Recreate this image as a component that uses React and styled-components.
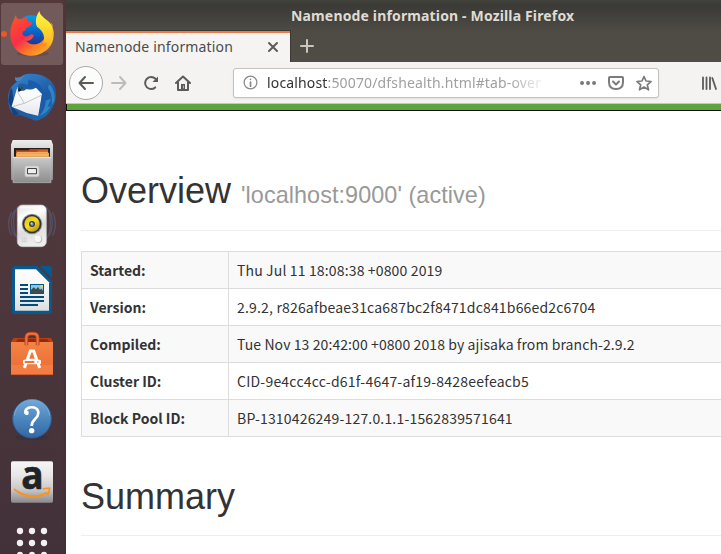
import React from "react";
import styled, { createGlobalStyle } from "styled-components";

const GlobalStyle = createGlobalStyle`
  * { box-sizing: border-box; }
  body { margin: 0; overflow: hidden; background: #fff; }
`;

const uiFont = `"Noto Sans", "Open Sans", sans-serif`;

const Desktop = styled.div`
  display: flex;
  width: 721px;
  height: 554px;
  overflow: hidden;
`;

const Launcher = styled.nav`
  flex: 0 0 66px;
  display: flex;
  flex-direction: column;
  padding-top: 2px;
  overflow: hidden;
  background: linear-gradient(90deg, transparent 62px, rgba(75, 35, 40, 0.35)),
    linear-gradient(#54393b, #51383b 35%, #49363b 65%, #43313a);
`;

const LauncherIcon = styled.svg`
  flex: none;
  display: block;
  width: 66px;
  height: 64px;
`;

const Window = styled.div`
  flex: 1;
  min-width: 0;
  display: flex;
  flex-direction: column;
`;

const Titlebar = styled.header`
  height: 62px;
  flex: none;
  display: flex;
  flex-direction: column;
  background: linear-gradient(#42423d 0, #3b3a36 5px, #403f3a 14px, #4e4b44 31px, #504d46 100%);
`;

const WindowTitle = styled.div`
  height: 30px;
  padding: 2px 0 0 225px;
  font: 700 14px/28px ${uiFont};
  letter-spacing: 0.15px;
  color: #dfdbd2;
  white-space: nowrap;
`;

const TabStrip = styled.div`
  flex: 1;
  display: flex;
  border-bottom: 1px solid #3a3833;
`;

const Tab = styled.div`
  width: 225px;
  height: 33px;
  display: flex;
  align-items: center;
  justify-content: space-between;
  padding: 0 11px 0 9px;
  border-top: 1px solid #3a3833;
  border-right: 1px solid #3a3833;
  background: linear-gradient(#ef7847 2px, #f5f4f2 2px);
  color: #4c4c4c;
  font: 400 14px/30px ${uiFont};
`;

const TabLabel = styled.span`
  letter-spacing: 0.16px;
  white-space: nowrap;
`;

const NewTab = styled.div`
  padding: 8px 0 0 8px;
`;

const Glyph = styled.svg`
  display: block;
  flex: none;
  width: ${(p) => p.$size || 16}px;
  height: ${(p) => p.$size || 16}px;
  fill: none;
  stroke: ${(p) => p.$color || "#5b5b58"};
  stroke-width: ${(p) => p.$weight || 2};
  stroke-linecap: round;
  stroke-linejoin: round;
`;

const Toolbar = styled.div`
  flex: none;
  height: 42px;
  display: flex;
  align-items: center;
  padding-left: 3px;
  background: #f4f3f2;
  border-bottom: 1px solid #c8c5c4;
`;

const BackButton = styled.div`
  width: 34px;
  height: 34px;
  display: flex;
  align-items: center;
  justify-content: center;
  border: 1px solid #aaa9a8;
  border-radius: 50%;
  background: #fcfcfc;
`;

const NavActions = styled.div`
  width: 130px;
  display: flex;
  gap: 16px;
  padding-left: 8px;
`;

const AddressBar = styled.div`
  width: 426px;
  height: 30px;
  display: flex;
  align-items: center;
  padding: 0 6px 0 9px;
  border: 1px solid #c4c1bf;
  border-radius: 3px;
  background: #fff;
  box-shadow: 0 1px 2px rgba(0, 0, 0, 0.08);
`;

const Address = styled.div`
  margin-left: 9px;
  white-space: nowrap;
  color: #a0a0a0;
  font: 400 14px/26px ${uiFont};
  letter-spacing: 0.15px;
  mask-image: linear-gradient(90deg, #000 calc(100% - 32px), rgba(0, 0, 0, 0.15));
`;

const Host = styled.span`
  color: #333;
`;

const PageActions = styled.div`
  display: flex;
  gap: 12px;
  margin-left: auto;
`;

const LibraryButton = styled.div`
  margin-left: 42px;
`;

const PageNav = styled.div`
  flex: none;
  height: 7px;
  background: #5fa33e;
  border-bottom: 1px solid #101010;
  border-left: 1px solid #101010;
`;

const Page = styled.main`
  flex: 1;
  min-height: 0;
  overflow: hidden;
  padding: 60px 0 0 15px;
  background: #fff;
  color: #333;
`;

const SectionHeader = styled.header`
  height: 60px;
  border-bottom: 1px solid #eee;
`;

const Heading = styled.h1`
  margin: 0;
  font: 400 36px/${(p) => p.$line || 40}px "Liberation Sans", Arial, sans-serif;
  white-space: nowrap;
`;

const Detail = styled.small`
  font-size: 23.4px;
  line-height: 1;
  letter-spacing: 0.07px;
  color: #999;
`;

const InfoTable = styled.dl`
  width: 800px;
  margin: 20px 0 39px;
  border: 1px solid #ddd;
  border-bottom: 0;
  font: 400 14px/20px "Noto Sans CJK SC", sans-serif;
`;

const InfoRow = styled.div`
  display: grid;
  grid-template-columns: 147px 1fr;
  height: 37px;
  border-bottom: 1px solid #ddd;
  &:nth-child(odd) { background: #f9f9f9; }
`;

const Term = styled.dt`
  padding: 8px;
  border-right: 1px solid #ddd;
  font-weight: 700;
`;

const Value = styled.dd`
  margin: 0;
  padding: 8px;
  letter-spacing: ${(p) => p.$tracking}px;
`;

const info = [
  { term: "Started:", value: "Thu Jul 11 18:08:38 +0800 2019", tracking: 0.15 },
  { term: "Version:", value: "2.9.2, r826afbeae31ca687bc2f8471dc841b66ed2c6704", tracking: 0.18 },
  { term: "Compiled:", value: "Tue Nov 13 20:42:00 +0800 2018 by ajisaka from branch-2.9.2", tracking: 0.09 },
  { term: "Cluster ID:", value: "CID-9e4cc4cc-d61f-4647-af19-8428eefeacb5", tracking: 0.22 },
  { term: "Block Pool ID:", value: "BP-1310426249-127.0.1.1-1562839571641", tracking: 0.18 },
];

const Gradient = ({ id, stops, x2 = 0, y2 = 1 }) => (
  <linearGradient id={id} x1="0" y1="0" x2={x2} y2={y2}>
    {stops.map((c, i) => (
      <stop key={i} offset={i / (stops.length - 1)} stopColor={c} />
    ))}
  </linearGradient>
);

const Firefox = () => (
  <LauncherIcon viewBox="0 6 198 192">
    <defs>
      <Gradient id="ffTail" stops={["#fff44f", "#ffe22f", "#ffc12a", "#ff8a1c"]} />
      <Gradient id="ffGlobe" stops={["#00a0e8", "#0869cc", "#202f91"]} />
      <Gradient id="ffFace" x2={0.8} stops={["#ff5a2a", "#fb4136", "#f62f4c", "#ff7a24", "#ffb52c"]} />
    </defs>
    <rect x="3" y="9" width="186" height="186" rx="9" fill="#725a5b" />
    <circle cx="12" cy="102" r="9" fill="#ee5527" />
    <ellipse cx="98" cy="161" rx="48" ry="8" fill="#3d2c32" opacity=".25" />
    <circle cx="94" cy="92" r="46" fill="url(#ffGlobe)" />
    <path d="M47 45C49 56 56 58 64 57C76 51 80 51 83 52L81 60C86 67 96 64 97 68C97 77 83 81 78 85L76 93C71 91 66 96 68 103C71 112 83 109 91 104C99 101 104 106 100 110C94 121 84 123 78 122C88 134 108 137 122 127C132 118 138 112 145 94L158 98C160 134 134 166 96 167C55 168 29 137 31 98C32 72 42 62 47 45Z" fill="url(#ffFace)" />
    <path d="M119 33C118 43 130 51 137 58C151 67 160 80 161 98C162 126 151 149 122 160C134 150 141 138 139 125C136 129 133 130 130 131C137 108 128 91 111 80C105 68 107 47 119 33Z" fill="url(#ffTail)" />
    <path d="M151 66L158 75C156 94 156 111 145 139C160 121 166 91 151 66Z" fill="#ffbf27" />
  </LauncherIcon>
);

const Thunderbird = () => (
  <LauncherIcon viewBox="0 198 198 192">
    <defs>
      <Gradient id="tbBody" x2={0.6} stops={["#3489cb", "#2a72bd", "#1d5aa3", "#1b66ac"]} />
      <Gradient id="tbMail" stops={["#fff", "#f5f6f7", "#e4e6ea"]} />
    </defs>
    <path d="M80 222C122 217 158 235 167 268C172 299 160 325 142 344C134 352 122 358 108 362L60 345L44 347C28 336 22 308 25 284C28 264 42 250 55 242C64 229 70 224 80 222Z" fill="url(#tbBody)" />
    <path d="M29 274L25 304L42 347L56 342L34 318L40 300L36 264Z" fill="#173f7e" />
    <path d="M52 262L80 268L110 262L126 281L117 348L80 339L35 320Z" fill="url(#tbMail)" />
    <path d="M51 273L73 310L124 286M73 310L37 320" fill="none" stroke="#b9babf" strokeWidth="2.5" />
    <path d="M86 240C106 243 124 254 129 272L140 288C143 281 143 273 142 262C148 281 148 302 138 322C132 334 125 343 114 350L126 282L108 263C100 268 90 269 80 268Z" fill="#1b5ca8" />
    <path d="M147 252C162 266 166 284 163 304L155 316C159 290 151 275 144 264ZM137 302L153 296L142 322L152 318C142 337 131 344 119 347C132 330 137 318 137 302Z" fill="#3a93d2" opacity=".7" />
    <path d="M46 231C54 235 64 231 72 226C68 239 58 246 49 244C45 240 44 236 46 231Z" fill="#4a86bd" />
    <path d="M54 272C51 262 53 255 60 251C73 248 83 254 84 263L72 272Z" fill="#1d5da3" />
    <path d="M54 271L58 262L65 271L56 276Z" fill="#22242a" />
    <circle cx="66" cy="264" r="3.5" fill="#1a2029" stroke="#7f7a45" strokeWidth="1.5" />
  </LauncherIcon>
);

const Files = () => (
  <LauncherIcon viewBox="0 0 198 192">
    <defs>
      <Gradient id="fileShell" stops={["#eee", "#b9b9b9", "#888"]} />
      <Gradient id="fileFront" stops={["#cacaca", "#aaa", "#8d8d8d"]} />
    </defs>
    <path d="M38 30H154L159 44V150H33V44Z" fill="url(#fileShell)" />
    <path d="M42 54H150V82H42Z" fill="#23201d" />
    <path d="M48 61H86L90 57H144V82H48Z" fill="#b94612" />
    <path d="M49 65H111L115 61H144V82H49Z" fill="#df681e" />
    <path d="M48 69H147V82H48Z" fill="#f59a3d" />
    <path d="M51 68H145M51 75H145" stroke="#ffe1a6" strokeWidth="2" />
    <path d="M39 81H153V158H39Z" fill="url(#fileFront)" stroke="#bababa" strokeWidth="2" />
    <path d="M39 83H153" stroke="#e5e5e5" strokeWidth="3" />
    <rect x="75" y="108" width="42" height="32" rx="5" fill="#ddd" stroke="#c2c2c2" strokeWidth="2" />
    <rect x="81" y="114" width="30" height="19" rx="3" fill="#444" />
    <rect x="84" y="117" width="24" height="13" rx="2" fill="#eee" />
  </LauncherIcon>
);

const MusicPlayer = () => (
  <LauncherIcon viewBox="0 192 198 192">
    <defs>
      <Gradient id="speaker" x2={0.3} stops={["#ddd", "#fff", "#dcdcdc", "#eee"]} />
      <Gradient id="cone" x2={0.8} stops={["#d9b718", "#f3de2a", "#b39418"]} />
    </defs>
    <g fill="none" stroke="#5f83b8" strokeWidth="4" opacity=".32">
      <path d="M44 242C31 260 31 302 46 319M35 247C23 267 23 298 35 316M54 229C35 250 37 313 57 329" />
      <path d="M147 242C160 260 160 302 145 319M157 247C169 267 169 298 157 316M138 229C157 250 155 313 136 329" />
    </g>
    <rect x="52" y="225" width="87" height="125" rx="15" fill="url(#speaker)" stroke="#c8c8c8" strokeWidth="2" />
    <path d="M64 232H127" stroke="#f9f9f9" strokeWidth="7" strokeLinecap="round" />
    <circle cx="96" cy="282" r="31" fill="#939496" />
    <circle cx="96" cy="282" r="28" fill="#303132" />
    <circle cx="96" cy="282" r="23" fill="url(#cone)" />
    <circle cx="96" cy="282" r="9" fill="#363b3d" />
    <circle cx="96" cy="282" r="5" fill="#8e999b" />
    <circle cx="94" cy="280" r="2.5" fill="#d0d0cd" />
    <circle cx="115" cy="328" r="12" fill="#c6c6c4" />
    <circle cx="113" cy="326" r="10" fill="#f7f7f5" />
    <path d="M67 324H79V335H67Z M73 324V335" fill="none" stroke="#ccc" strokeWidth="2" />
  </LauncherIcon>
);

const Writer = () => (
  <LauncherIcon viewBox="0 9 198 192">
    <defs><Gradient id="paper" stops={["#fff", "#f4f4f4", "#ddd"]} /></defs>
    <path d="M44 33H112L156 78V169Q156 177 147 177H44Q36 177 36 168V41Q36 33 44 33Z" fill="#07598f" />
    <path d="M45 43H108L147 82V167H45Z" fill="url(#paper)" />
    <path d="M119 33H149Q156 33 156 41V70Z" fill="#07598f" />
    <path d="M60 90H84M60 102H84M60 114H84M60 126H132M60 138H132M60 150H114" stroke="#004c7d" strokeWidth="6" />
    <rect x="90" y="87" width="42" height="30" fill="#00598f" />
    <rect x="93" y="90" width="36" height="24" fill="#82cbe8" />
    <path d="M93 114V105L101 97L108 103L114 96L120 104L125 101L129 108V114Z" fill="#414b4c" />
    <path d="M120 90H129V99Q121 99 120 90Z" fill="#efd52c" />
  </LauncherIcon>
);

const Software = () => (
  <LauncherIcon viewBox="0 201 198 192">
    <defs><Gradient id="bag" stops={["#f28445", "#f07639", "#ed6938"]} /></defs>
    <path d="M33 261L41 249H153L159 261Z" fill="#bd3d15" />
    <path d="M48 261L54 252H141L149 261Z" fill="#8e2c12" />
    <path d="M33 261H159V360H33Z" fill="url(#bag)" />
    <path d="M33 330H159V360H33Z" fill="#f5854b" opacity=".65" />
    <path d="M33 359H159" stroke="#bb4820" strokeWidth="2" />
    <path d="M79 271V249Q79 236 91 236H101Q113 236 113 249V271" fill="none" stroke="#b9441e" strokeWidth="11" />
    <path d="M79 271V249Q79 236 91 236H101Q113 236 113 249V271" fill="none" stroke="#f0733f" strokeWidth="6" />
    <path d="M73 339L91 288H101L119 339M81 316H113" fill="none" stroke="#fff" strokeWidth="9" />
    <rect x="69" y="314" width="54" height="14" rx="4" fill="#fff" />
    <path d="M74 321H103" stroke="#f07338" strokeWidth="6" />
    <path d="M111 318L119 321L111 324Z" fill="#f7a37d" />
  </LauncherIcon>
);

const Help = () => (
  <LauncherIcon viewBox="0 3 198 192">
    <defs><Gradient id="help" stops={["#74a9d6", "#4c87bf", "#3266a2"]} /></defs>
    <ellipse cx="96" cy="157" rx="51" ry="9" fill="#332b36" opacity=".4" />
    <circle cx="96" cy="101" r="58" fill="url(#help)" stroke="#285f98" strokeWidth="3" />
    <path d="M43 92C49 28 143 28 149 92" fill="none" stroke="#a5c4df" strokeWidth="2" opacity=".7" />
    <circle cx="80" cy="84" r="6.5" fill="#fff" />
    <path d="M77 85C70 63 116 59 115 84C114 103 95 102 95 123" fill="none" stroke="#fff" strokeWidth="8" />
    <circle cx="95" cy="137" r="8" fill="#fff" />
  </LauncherIcon>
);

const AmazonLetter = styled.text`
  font: 700 116px "Open Sans", sans-serif;
  fill: #202326;
  stroke: #202326;
  stroke-width: 2;
`;

const Amazon = () => (
  <LauncherIcon viewBox="0 195 198 192">
    <defs><Gradient id="tile" stops={["#f6f6f6", "#e9e7e8", "#cbc9ca", "#8d898d"]} /></defs>
    <rect x="33" y="229" width="126" height="124" rx="5" fill="url(#tile)" />
    <AmazonLetter x="64" y="313" textLength="67" lengthAdjust="spacingAndGlyphs">a</AmazonLetter>
    <path d="M42 309C70 333 112 337 140 320L144 325C113 345 70 342 42 315Z" fill="#f6941d" />
    <path d="M128 312Q137 309 149 310Q148 321 142 331" fill="none" stroke="#f6941d" strokeWidth="5" />
  </LauncherIcon>
);

const AppGrid = () => (
  <LauncherIcon viewBox="0 387 198 192">
    {[438, 474, 510].map((y) => [60, 96, 132].map((x) => <circle key={`${x}-${y}`} cx={x} cy={y} r="9.5" fill="#f3f1f1" />))}
  </LauncherIcon>
);

export default function App() {
  return (
    <>
      <GlobalStyle />
      <Desktop>
        <Launcher>
          <Firefox />
          <Thunderbird />
          <Files />
          <MusicPlayer />
          <Writer />
          <Software />
          <Help />
          <Amazon />
          <AppGrid />
        </Launcher>
        <Window>
          <Titlebar>
            <WindowTitle>Namenode information - Mozilla Firefox</WindowTitle>
            <TabStrip>
              <Tab>
                <TabLabel>Namenode information</TabLabel>
                <Glyph $size={12} viewBox="0 0 12 12"><path d="M2 2L10 10M10 2L2 10" /></Glyph>
              </Tab>
              <NewTab>
                <Glyph viewBox="0 0 16 16" $color="#c9c6bf"><path d="M8 2V14M2 8H14" /></Glyph>
              </NewTab>
            </TabStrip>
          </Titlebar>
          <Toolbar>
            <BackButton>
              <Glyph viewBox="0 0 16 16"><path d="M15 8H1.5M7 2L1.5 8L7 14" /></Glyph>
            </BackButton>
            <NavActions>
              <Glyph viewBox="0 0 16 16" $color="#bdbcba"><path d="M1 8H14.5M9 2L14.5 8L9 14" /></Glyph>
              <Glyph viewBox="0 0 16 16">
                <path d="M12.2 12.4A6 6 0 1 1 12.4 3.8" />
                <path d="M15 1.5V7H9.5Z" fill="#5b5b58" stroke="none" />
              </Glyph>
              <Glyph viewBox="0 0 16 16">
                <path d="M1 8L8 1.5L15 8M3 7V15H13V7" />
                <path d="M6 9H10V15H6Z" fill="#5b5b58" stroke="none" />
                <path d="M8.5 11V13" stroke="#bbb" strokeWidth="1" />
              </Glyph>
            </NavActions>
            <AddressBar>
              <Glyph viewBox="0 0 16 16" $size={15} $color="#888" $weight={1.3}>
                <circle cx="8" cy="8" r="6.8" />
                <path d="M8 7.5V12M8 4.5V4.6" strokeWidth="1.8" />
              </Glyph>
              <Address><Host>localhost</Host>:50070/dfshealth.html#tab-over</Address>
              <PageActions>
                <Glyph viewBox="0 0 16 16" $color="#777"><path d="M2 8H2.1M8 8H8.1M14 8H14.1" strokeWidth="3.8" /></Glyph>
                <Glyph viewBox="0 0 16 16" $color="#7b7b7b"><path d="M2 2H14Q15 2 15 3V7Q15 14 8 14Q1 14 1 7V3Q1 2 2 2ZM5 6.5L8 9.5L11 6.5" /></Glyph>
                <Glyph viewBox="0 0 16 16" $color="#7b7b7b" $weight={1.7}><path d="M8 1.5L10 6L15 6.5L11.3 9.8L12.5 14.8L8 12.1L3.5 14.8L4.7 9.8L1 6.5L6 6Z" /></Glyph>
              </PageActions>
            </AddressBar>
            <LibraryButton>
              <Glyph viewBox="0 0 16 16"><path d="M2 2.5V14M5.5 2.5V14M9 2.5V14M11.3 3L15 14" strokeWidth="1.8" /></Glyph>
            </LibraryButton>
          </Toolbar>
          <PageNav />
          <Page>
            <SectionHeader>
              <Heading>Overview <Detail>'localhost:9000' (active)</Detail></Heading>
            </SectionHeader>
            <InfoTable>
              {info.map(({ term, value, tracking }) => (
                <InfoRow key={term}><Term>{term}</Term><Value $tracking={tracking}>{value}</Value></InfoRow>
              ))}
            </InfoTable>
            <SectionHeader><Heading $line={42}>Summary</Heading></SectionHeader>
          </Page>
        </Window>
      </Desktop>
    </>
  );
}
